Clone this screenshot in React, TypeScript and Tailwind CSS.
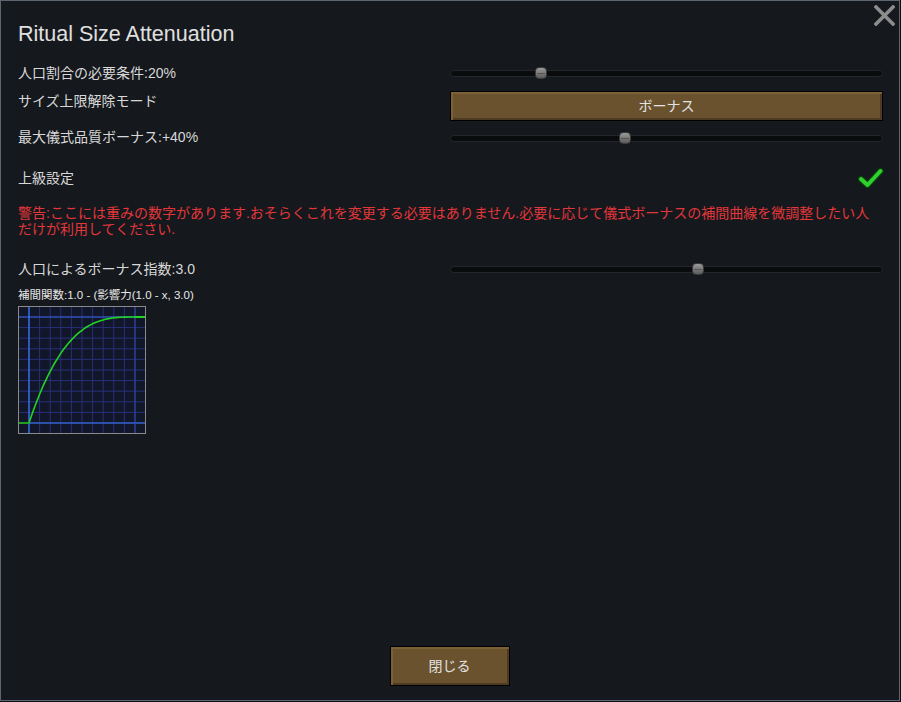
import React from 'react';

const font = { fontFamily: '"Liberation Sans", "Noto Sans CJK JP", sans-serif' };

function Slider({ value }: { value: number }) {
  // value 0..1, thumb travels between the track's ends minus half its width
  const left = value * 420;
  return (
    <div className="relative h-[7px] w-[433px] rounded-full border border-[#23262b] bg-[#090b0d]">
      <div
        className="absolute top-1/2 h-[12px] w-[12px] -translate-y-1/2 rounded-[4px] border border-[#3a3a3a] bg-gradient-to-b from-[#9a9a9a] via-[#7a7a7a] to-[#5c5c5c]"
        style={{ left }}
      >
        <div className="mx-auto mt-[4.5px] h-px w-[8px] bg-[#555]" />
      </div>
    </div>
  );
}

function WoodButton({ label, className }: { label: string; className: string }) {
  return (
    <button
      className={`flex items-center justify-center border border-black bg-[#6a522f] text-[14px] text-[#e2e2e2] shadow-[inset_2px_2px_0_#7c6137,inset_-2px_-2px_0_#4d3a20] ${className}`}
      style={font}
    >
      {label}
    </button>
  );
}

function CurveGraph() {
  const pts: string[] = [];
  for (let i = 0; i <= 50; i++) {
    const x = i / 50;
    const y = 1 - Math.pow(1 - x, 3);
    pts.push(`${(10 + 106 * x).toFixed(1)},${(116 - 106 * y).toFixed(1)}`);
  }
  const grid: number[] = [];
  for (let i = 0; i <= 10; i++) grid.push(10 + i * 10.6);
  return (
    <div className="h-[128px] w-[128px] border border-[#8a8a8a] bg-[#121629]">
      <svg width="126" height="126" viewBox="0 0 126 126">
        {grid.map((g) => (
          <g key={g}>
            <line x1={g} y1={0} x2={g} y2={126} stroke="#27307a" strokeWidth="1" />
            <line x1={0} y1={g} x2={126} y2={g} stroke="#27307a" strokeWidth="1" />
          </g>
        ))}
        <line x1={0} y1={116} x2={126} y2={116} stroke="#3c7cff" strokeWidth="1.2" />
        <line x1={0} y1={10} x2={126} y2={10} stroke="#3560d8" strokeWidth="1.2" />
        <line x1={10} y1={0} x2={10} y2={126} stroke="#3c7cff" strokeWidth="1.2" />
        <line x1={116} y1={0} x2={116} y2={126} stroke="#2d4aa8" strokeWidth="1" />
        <polyline points={`0,116 10,116`} fill="none" stroke="#1fa01f" strokeWidth="2" />
        <polyline points={pts.join(' ')} fill="none" stroke="#22d422" strokeWidth="1.6" />
        <polyline points={`116,10 126,10`} fill="none" stroke="#22d422" strokeWidth="2" />
      </svg>
    </div>
  );
}

export default function App() {
  return (
    <div className="h-[702px] w-[901px] bg-[#0f1114]">
      <div
        className="relative flex h-[701px] w-[900px] flex-col border border-[#5d6670] bg-[#15181d] pl-[17px] pr-[16px] text-[#d8d8d8]"
        style={font}
      >
        {/* close */}
        <button className="absolute right-[4px] top-[4px]">
          <svg width="21" height="21" viewBox="0 0 21 21">
            <path d="M2 2 L19 19 M19 2 L2 19" stroke="#8c8c8c" strokeWidth="3.6" strokeLinecap="square" />
          </svg>
        </button>

        <h1 className="mt-[21px] h-[24px] text-[21.5px] leading-[24px] text-[#e0e0e0]">Ritual Size Attenuation</h1>

        <div className="mt-[15px] flex h-[24px] items-center justify-between">
          <span className="text-[14px]">人口割合の必要条件:20%</span>
          <Slider value={0.2} />
        </div>

        <div className="mt-[6px] flex h-[30px] justify-between">
          <span className="pt-[1px] text-[14px] leading-[18px]">サイズ上限解除モード</span>
          <WoodButton label="ボーナス" className="h-[30px] w-[433px]" />
        </div>

        <div className="mt-[5px] flex h-[24px] items-center justify-between">
          <span className="-mt-[2px] text-[14px] leading-[18px]">最大儀式品質ボーナス:+40%</span>
          <Slider value={0.4} />
        </div>

        <div className="mt-[16px] flex h-[24px] items-center justify-between">
          <span className="text-[14px]">上級設定</span>
          <svg width="26" height="24" viewBox="0 0 26 24" className="mr-[-1px]">
            <path d="M3 13 L9.5 19 L22.5 5" fill="none" stroke="#0d3d0d" strokeWidth="6.5" strokeLinecap="round" strokeLinejoin="round" />
            <path d="M3 13 L9.5 19 L22.5 5" fill="none" stroke="#2ed12e" strokeWidth="4" strokeLinecap="round" strokeLinejoin="round" />
          </svg>
        </div>

        <p className="mt-[15px] text-[14px] leading-[16px] text-[#e2373a]">
          <span className="block whitespace-nowrap">
            警告:ここには重みの数字があります.おそらくこれを変更する必要はありません.必要に応じて儀式ボーナスの補間曲線を微調整したい人
          </span>
          <span className="block">だけが利用してください.</span>
        </p>

        <div className="mt-[20px] flex h-[24px] items-center justify-between">
          <span className="text-[14px]">人口によるボーナス指数:3.0</span>
          <Slider value={0.574} />
        </div>

        <div className="mt-[7px] h-[14px] text-[11.5px] leading-[14px] text-[#e8e8e8]">補間関数:1.0 - (影響力(1.0 - x, 3.0)</div>

        <div className="mt-[4px]">
          <CurveGraph />
        </div>

        <div className="mb-[14px] mt-auto flex justify-center pr-[2px]">
          <WoodButton label="閉じる" className="h-[40px] w-[120px]" />
        </div>
      </div>
    </div>
  );
}
